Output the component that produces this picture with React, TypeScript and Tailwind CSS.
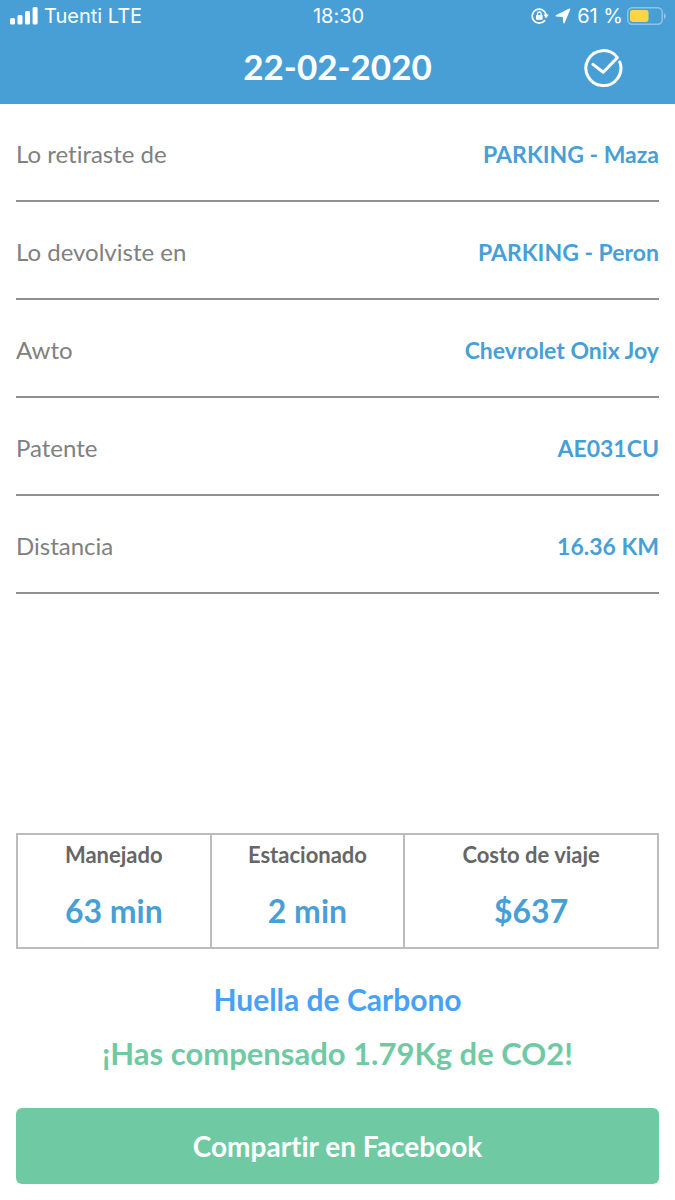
type TripDetail = {
  label: string;
  value: string;
};

const details: TripDetail[] = [
  { label: "Lo retiraste de", value: "PARKING - Maza" },
  { label: "Lo devolviste en", value: "PARKING - Peron" },
  { label: "Awto", value: "Chevrolet Onix Joy" },
  { label: "Patente", value: "AE031CU" },
  { label: "Distancia", value: "16.36 KM" },
];

const summary: TripDetail[] = [
  { label: "Manejado", value: "63 min" },
  { label: "Estacionado", value: "2 min" },
  { label: "Costo de viaje", value: "$637" },
];

function SignalIcon() {
  return (
    <svg width="28" height="18" viewBox="0 0 28 18" fill="currentColor" aria-hidden="true">
      <rect x="0" y="11" width="5" height="6.5" rx="1.5" />
      <rect x="7.5" y="8" width="5" height="9.5" rx="1.5" />
      <rect x="15" y="4" width="5" height="13.5" rx="1.5" />
      <rect x="22.6" y="0" width="5" height="17.5" rx="1.5" />
    </svg>
  );
}

function RotationLockIcon() {
  return (
    <svg width="18" height="18" viewBox="0 0 18 18" fill="none" aria-hidden="true">
      <path
        d="M13.6 13.6A7 7 0 1 1 15 7.4"
        stroke="currentColor"
        strokeWidth="1.7"
        strokeLinecap="round"
      />
      <path d="M12.4 7.6h5.4l-2.7 3.8z" fill="currentColor" />
      <rect x="5" y="8" width="6.6" height="4.8" rx="0.7" fill="currentColor" />
      <path d="M6.5 8.4V6.8a1.8 1.8 0 0 1 3.6 0v1.6" stroke="currentColor" strokeWidth="1.3" />
    </svg>
  );
}

function LocationIcon() {
  return (
    <svg width="16" height="16" viewBox="0 0 16 16" fill="currentColor" aria-hidden="true">
      <path
        d="M1.2 7.8 14.6 1.2 9 14.8 8.4 8.2z"
        stroke="currentColor"
        strokeWidth="1.4"
        strokeLinejoin="round"
      />
    </svg>
  );
}

function BatteryIcon() {
  return (
    <svg width="40" height="18" viewBox="0 0 40 18" fill="none" aria-hidden="true">
      <rect x="0.8" y="0.8" width="34.4" height="16.4" rx="4.4" stroke="#8fc4e6" strokeWidth="1.5" />
      <rect x="3" y="3" width="18.5" height="12" rx="2.4" fill="#fbd545" />
      <path d="M37 6.2c1.3.4 2 1.5 2 2.9s-.7 2.5-2 2.9z" fill="#8fc4e6" />
    </svg>
  );
}

function CheckIcon() {
  return (
    <svg
      width="40"
      height="40"
      viewBox="0 0 40 40"
      fill="none"
      stroke="currentColor"
      strokeWidth="3"
      strokeLinecap="round"
      strokeLinejoin="round"
      aria-hidden="true"
    >
      <path d="M36.8 14A17.5 17.5 0 1 1 34.4 9.6L20.2 24.2 10 16.4" />
    </svg>
  );
}

function StatusBar() {
  return (
    <div className="grid h-8 grid-cols-3 items-center pr-2 pl-[10px] font-['Inter',sans-serif] text-xl leading-6">
      <div className="flex items-center gap-[6px]">
        <SignalIcon />
        <span>Tuenti LTE</span>
      </div>
      <span className="text-center">18:30</span>
      <div className="flex items-center justify-end gap-[6px]">
        <RotationLockIcon />
        <LocationIcon />
        <div className="flex items-center gap-1">
          <span className="whitespace-nowrap">61 %</span>
          <BatteryIcon />
        </div>
      </div>
    </div>
  );
}

export default function App() {
  return (
    <div className="flex min-h-screen flex-col bg-white font-['Lato',sans-serif] [font-variant-ligatures:none]">
      <header className="bg-[#489fd6] text-white">
        <StatusBar />
        <div className="grid grid-cols-[1fr_auto_1fr] items-start pb-4">
          <h1 className="col-start-2 pt-3 text-[35px] leading-[44px] font-bold">22-02-2020</h1>
          <button type="button" aria-label="Confirmar" className="mt-4 mr-[52px] justify-self-end">
            <CheckIcon />
          </button>
        </div>
      </header>

      <main className="flex grow flex-col px-4 pb-4">
        <dl>
          {details.map(({ label, value }) => (
            <div
              key={label}
              className="flex justify-between border-b-2 border-[#8f8f8f] pt-8 pb-7 text-2xl leading-9"
            >
              <dt className="text-[#808080]">{label}</dt>
              <dd className="text-[23px] font-bold text-[#489fd6]">{value}</dd>
            </div>
          ))}
        </dl>

        <dl className="mt-auto grid grid-cols-[10fr_10fr_13fr] divide-x-2 divide-[#bcbcbc] border-2 border-[#bcbcbc] text-center font-bold">
          {summary.map(({ label, value }) => (
            <div key={label} className="pt-2 pb-4">
              <dt className="text-[22px] leading-6 text-[#666666]">{label}</dt>
              <dd className="mt-6 text-[32px] leading-10 text-[#489fd6]">{value}</dd>
            </div>
          ))}
        </dl>

        <section className="mt-7 text-center font-bold">
          <h2 className="text-[30px] leading-[44px] text-[#47a1f5]">Huella de Carbono</h2>
          <p className="mt-[10px] text-[31px] leading-[44px] text-[#6fcaa4]">
            ¡Has compensado 1.79Kg de CO2!
          </p>
        </section>

        <button
          type="button"
          className="mt-[33px] rounded-md bg-[#6fcaa4] py-4 text-[28px] leading-[44px] font-bold text-white"
        >
          Compartir en Facebook
        </button>
      </main>
    </div>
  );
}
